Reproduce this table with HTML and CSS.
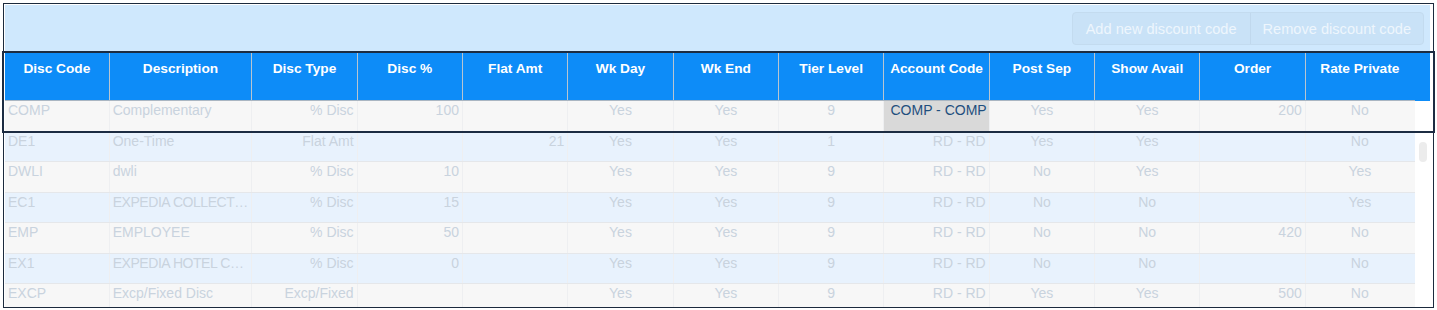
FILE: index.html
```html
<!DOCTYPE html>
<html>
<head>
<meta charset="utf-8">
<link rel="stylesheet" href="styles.css">
</head>
<body>
<div class="frame">
  <div class="toolbar">
    <div class="btn-group">
      <button class="btn">Add new discount code</button>
      <button class="btn">Remove discount code</button>
    </div>
  </div>
  <div class="grid-head">
    <div class="hc">Disc Code</div>
    <div class="hc">Description</div>
    <div class="hc">Disc Type</div>
    <div class="hc">Disc %</div>
    <div class="hc">Flat Amt</div>
    <div class="hc">Wk Day</div>
    <div class="hc">Wk End</div>
    <div class="hc">Tier Level</div>
    <div class="hc">Account Code</div>
    <div class="hc">Post Sep</div>
    <div class="hc">Show Avail</div>
    <div class="hc">Order</div>
    <div class="hc last">Rate Private</div>
  </div>
  <div class="grid-body">
    <div class="rows">
      <div class="row odd">
        <div class="c l">COMP</div><div class="c l">Complementary</div><div class="c r">% Disc</div><div class="c r">100</div><div class="c r"></div><div class="c m">Yes</div><div class="c m">Yes</div><div class="c m">9</div><div class="c r sel">COMP - COMP</div><div class="c m">Yes</div><div class="c m">Yes</div><div class="c r">200</div><div class="c m">No</div>
      </div>
      <div class="row even">
        <div class="c l">DE1</div><div class="c l">One-Time</div><div class="c r">Flat Amt</div><div class="c r"></div><div class="c r">21</div><div class="c m">Yes</div><div class="c m">Yes</div><div class="c m">1</div><div class="c r">RD - RD</div><div class="c m">Yes</div><div class="c m">Yes</div><div class="c r"></div><div class="c m">No</div>
      </div>
      <div class="row odd">
        <div class="c l">DWLI</div><div class="c l">dwli</div><div class="c r">% Disc</div><div class="c r">10</div><div class="c r"></div><div class="c m">Yes</div><div class="c m">Yes</div><div class="c m">9</div><div class="c r">RD - RD</div><div class="c m">No</div><div class="c m">Yes</div><div class="c r"></div><div class="c m">Yes</div>
      </div>
      <div class="row even">
        <div class="c l">EC1</div><div class="c l tight">EXPEDIA COLLECT…</div><div class="c r">% Disc</div><div class="c r">15</div><div class="c r"></div><div class="c m">Yes</div><div class="c m">Yes</div><div class="c m">9</div><div class="c r">RD - RD</div><div class="c m">No</div><div class="c m">No</div><div class="c r"></div><div class="c m">Yes</div>
      </div>
      <div class="row odd">
        <div class="c l">EMP</div><div class="c l">EMPLOYEE</div><div class="c r">% Disc</div><div class="c r">50</div><div class="c r"></div><div class="c m">Yes</div><div class="c m">Yes</div><div class="c m">9</div><div class="c r">RD - RD</div><div class="c m">No</div><div class="c m">No</div><div class="c r">420</div><div class="c m">No</div>
      </div>
      <div class="row even">
        <div class="c l">EX1</div><div class="c l tight">EXPEDIA HOTEL C…</div><div class="c r">% Disc</div><div class="c r">0</div><div class="c r"></div><div class="c m">Yes</div><div class="c m">Yes</div><div class="c m">9</div><div class="c r">RD - RD</div><div class="c m">No</div><div class="c m">No</div><div class="c r"></div><div class="c m">No</div>
      </div>
      <div class="row odd">
        <div class="c l">EXCP</div><div class="c l">Excp/Fixed Disc</div><div class="c r">Excp/Fixed</div><div class="c r"></div><div class="c r"></div><div class="c m">Yes</div><div class="c m">Yes</div><div class="c m">9</div><div class="c r">RD - RD</div><div class="c m">Yes</div><div class="c m">Yes</div><div class="c r">500</div><div class="c m">No</div>
      </div>
    </div>
    <div class="track"><div class="thumb"></div></div>
  </div>
  <div class="highlight"></div>
</div>
</body>
</html>
```

FILE: styles.css
```css
html, body {
  margin: 0;
  padding: 0;
  background: #ffffff;
}

body {
  font-family: "Liberation Sans", Arial, Helvetica, sans-serif;
  padding: 3px;
}

.frame {
  position: relative;
  box-sizing: border-box;
  width: 1431px;
  height: 305px;
  border: 1px solid #1b2a3d;
  padding: 1px 3px 0 1px;
  background: #ffffff;
}

.toolbar {
  height: 48px;
  box-sizing: border-box;
  background: #cfe8fd;
  display: flex;
  justify-content: flex-end;
  align-items: flex-start;
  padding: 7px 6px 0 0;
}

.btn-group {
  display: flex;
  height: 33px;
  box-sizing: border-box;
  border: 1px solid #c3dbef;
  border-radius: 4px;
  background: #c9e2f7;
  overflow: hidden;
}

.btn {
  font-family: "Liberation Sans", Arial, Helvetica, sans-serif;
  font-size: 14.6px;
  color: #eef6fd;
  background: transparent;
  border: none;
  padding: 0 13px;
  height: 100%;
  margin: 0;
}

.btn + .btn {
  border-left: 1px solid #c0d8ed;
  padding: 0 12px 0 12px;
}

.grid-head {
  display: grid;
  grid-template-columns: 104.7px 142.6px repeat(10, 105.35px) 108.2px;
  background: #0d8cf8;
  height: 48px;
  box-sizing: border-box;
  padding-right: 15px;
  position: relative;
}

.grid-head::after {
  content: "";
  position: absolute;
  left: 0;
  right: 15px;
  bottom: 0;
  height: 1px;
  background: #aab6c2;
}

.hc {
  color: #ffffff;
  font-weight: bold;
  font-size: 13.7px;
  line-height: 18px;
  text-align: center;
  padding-top: 7px;
  border-right: 1px solid #b9c5d0;
  box-sizing: border-box;
  white-space: nowrap;
}

.hc.last {
  border-right: none;
}

.grid-body {
  display: flex;
  height: 206px;
  overflow: hidden;
}

.rows {
  width: 1410px;
  flex: none;
}

.row {
  display: grid;
  grid-template-columns: 104.7px 142.6px repeat(10, 105.35px) 108.2px;
  height: 30.5px;
  box-sizing: border-box;
  border-bottom: 1px solid #e5e7ea;
}

.row.odd {
  background: #f7f7f7;
}

.row.even {
  background: #e8f2fd;
}

.c {
  font-size: 14px;
  line-height: 19px;
  color: #c9d3de;
  padding: 0 3px;
  border-right: 1px solid #eeeff1;
  box-sizing: border-box;
  white-space: nowrap;
  overflow: hidden;
}

.c:last-child {
  border-right: none;
}

.c.l { text-align: left; }
.c.r { text-align: right; }
.c.m { text-align: center; }

.c.tight {
  letter-spacing: -0.45px;
  padding-right: 0;
}

.c.sel {
  background: #d9d9d9;
  color: #1f4f7e;
  padding-right: 2px;
}

.track {
  width: 15px;
  flex: none;
  background: #ffffff;
}

.thumb {
  width: 8px;
  height: 20px;
  margin: 41px 0 0 4px;
  border-radius: 4px;
  background: #ececec;
}

.highlight {
  position: absolute;
  left: -2px;
  top: 47px;
  width: 1433px;
  height: 82px;
  box-sizing: border-box;
  border: 2px solid #1c2c42;
  pointer-events: none;
}
```
